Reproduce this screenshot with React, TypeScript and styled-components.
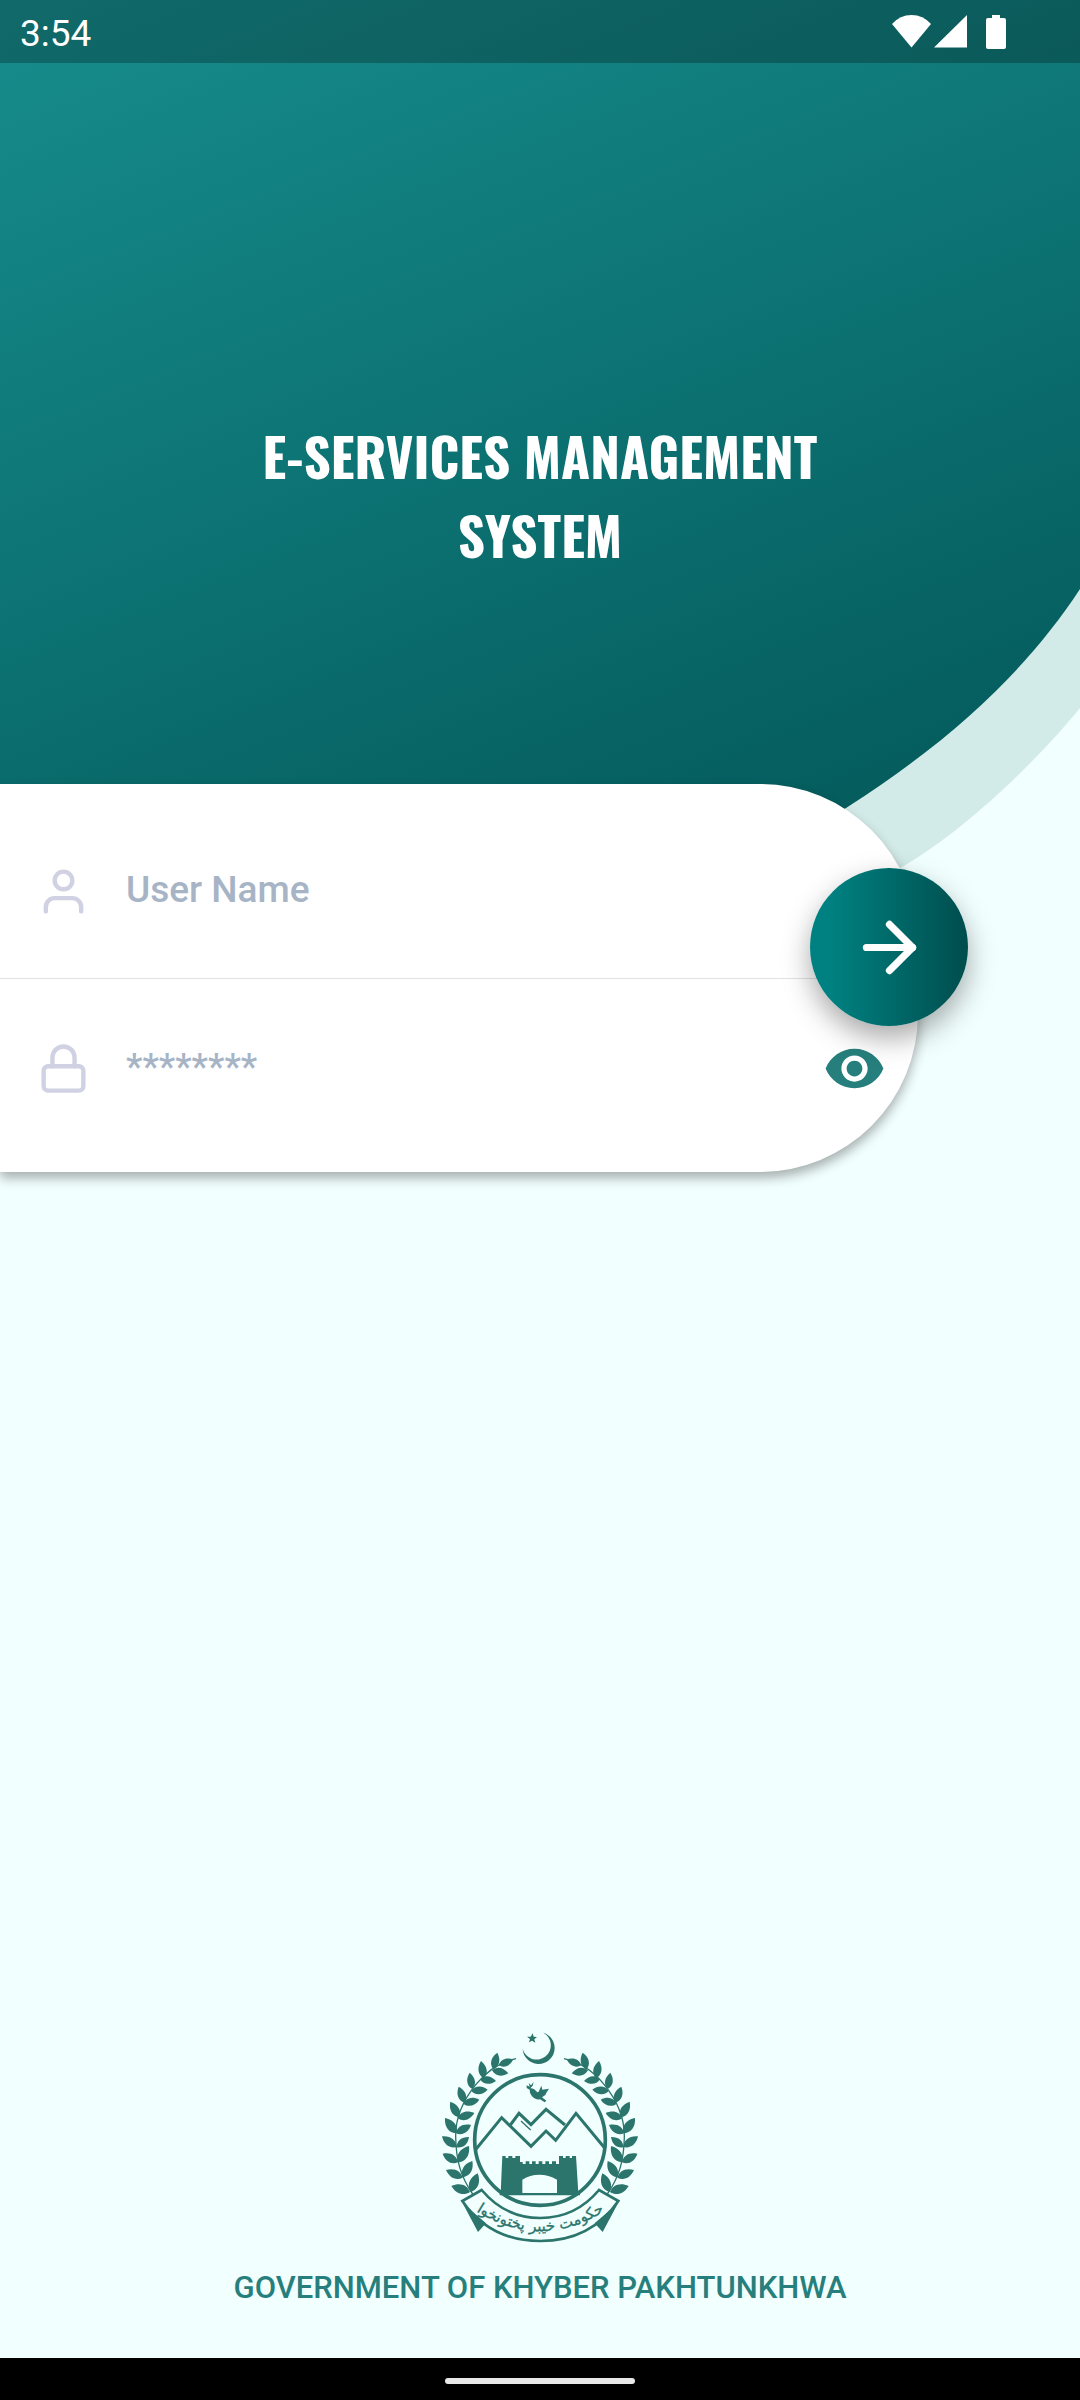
import React, { useState } from "react";
import styled, { createGlobalStyle } from "styled-components";
import { FiArrowRight, FiLock, FiUser } from "react-icons/fi";
import { MdVisibility } from "react-icons/md";

const GlobalStyle = createGlobalStyle`
  *, *::before, *::after { box-sizing: border-box; }
  body {
    margin: 0;
    background: #f1fffe;
    font-family: Roboto, "Noto Sans", sans-serif;
  }
`;

const Page = styled.div`
  position: relative;
  display: flex;
  flex-direction: column;
  min-height: 100vh;
  background: #f1fffe;
`;

const Backdrop = styled.svg`
  position: absolute;
  top: 0;
  left: 0;
  width: 100%;
  height: 900px;
`;

const StatusBar = styled.header`
  position: relative;
  display: flex;
  align-items: center;
  justify-content: space-between;
  height: 63px;
  padding: 0 74px 0 20px;
  background: rgba(0, 0, 0, 0.25);
  color: #fff;
`;

const Clock = styled.time`
  padding-top: 4px;
  font-size: 37px;
  line-height: 44px;
`;

const StatusIcons = styled.svg`
  width: 114px;
  height: 34px;
  fill: currentColor;
`;

const Hero = styled.section`
  position: relative;
  display: flex;
  justify-content: center;
  height: 721px;
  padding-top: 353px;
`;

const Title = styled.h1`
  max-width: 640px;
  margin: 0;
  color: #fff;
  font-family: Oswald, "Roboto Condensed", Roboto, sans-serif;
  font-size: 53px;
  font-weight: 700;
  line-height: 79px;
  text-align: center;
`;

const LoginForm = styled.form`
  position: relative;
  width: 85%;
`;

const Card = styled.div`
  background: #fff;
  border-radius: 0 158px 158px 0;
  box-shadow: 0 6px 12px rgba(0, 0, 0, 0.32);
`;

const Field = styled.div<{ $last?: boolean }>`
  display: flex;
  align-items: center;
  gap: 36px;
  height: ${(p) => (p.$last ? "193px" : "195px")};
  padding: ${(p) => (p.$last ? "0 32px 14px 37px" : "20px 32px 0 37px")};
  border-bottom: ${(p) => (p.$last ? "none" : "1px solid #e2e2e6")};
`;

const FieldIcon = styled.label`
  display: flex;
  color: #d0d2e3;
`;

const TextInput = styled.input`
  flex: 1;
  min-width: 0;
  height: 64px;
  padding: 0 0 4px;
  border: 0;
  outline: 0;
  background: transparent;
  color: #4a5a6c;
  font: 500 37px/42px Roboto, sans-serif;

  &::placeholder {
    color: #a7b4c6;
    opacity: 1;
  }
`;

const EyeButton = styled.button`
  display: flex;
  padding: 0;
  border: 0;
  background: none;
  color: #267f7c;
`;

const SubmitButton = styled.button`
  position: absolute;
  top: 84px;
  right: -50px;
  display: flex;
  align-items: center;
  justify-content: center;
  width: 158px;
  height: 158px;
  padding: 0;
  border: 0;
  border-radius: 50%;
  background: linear-gradient(90deg, #008181 12%, #004d4d 100%);
  box-shadow: 0 12px 28px rgba(0, 0, 0, 0.34);
  color: #fff;
`;

const Footer = styled.footer`
  display: flex;
  flex-direction: column;
  align-items: center;
  gap: 24px;
  margin-top: auto;
  padding-bottom: 50px;
`;

const Emblem = styled.svg`
  width: 200px;
  height: 214px;
  color: #2b756c;
`;

const Organisation = styled.p`
  margin: 0;
  color: #267f7c;
  font-size: 31px;
  font-weight: 500;
  line-height: 40px;
`;

const NavBar = styled.div`
  display: flex;
  align-items: center;
  justify-content: center;
  height: 42px;
  padding-top: 4px;
  background: #000;
`;

const NavHandle = styled.span`
  width: 190px;
  height: 6px;
  border-radius: 3px;
  background: #e8e8e8;
`;

type Leaf = [number, number, number, number];

/* Each leaf runs from its base on the stem to its tip. */
const LEAVES: Leaf[] = [
  [236, 166, 280, 148],
  [220, 178, 232, 128],
  [192, 205, 183, 153],
  [157, 237, 149, 188],
  [134, 278, 116, 230],
  [118, 322, 91, 275],
  [110, 370, 75, 324],
  [110, 411, 66, 379],
  [114, 457, 68, 431],
  [128, 503, 78, 480],
  [150, 546, 94, 528],
  [216, 181, 265, 190],
  [180, 208, 228, 213],
  [154, 243, 203, 239],
  [130, 281, 178, 269],
  [113, 325, 163, 309],
  [108, 370, 153, 345],
  [110, 412, 147, 381],
  [114, 457, 147, 408],
  [128, 502, 157, 453],
  [152, 546, 173, 490],
];

function leafPath([bx, by, tx, ty]: Leaf) {
  const dx = tx - bx;
  const dy = ty - by;
  const w = 0.31;
  const c = (along: number, side: number) =>
    `${(bx + dx * along - dy * side).toFixed(1)} ${(by + dy * along + dx * side).toFixed(1)}`;
  return `M${bx} ${by}C${c(0.25, w)} ${c(0.65, w)} ${tx} ${ty}C${c(0.65, -w)} ${c(0.25, -w)} ${bx} ${by}Z`;
}

const LEAF_SHAPE = LEAVES.map(leafPath).join("");

function Branch({ mirrored }: { mirrored?: boolean }) {
  return (
    <g transform={mirrored ? "matrix(-1 0 0 1 720 0)" : undefined}>
      <path d={LEAF_SHAPE} fill="currentColor" />
      <path
        d="M288 146C240 156 200 184 168 223C128 272 106 320 107 380C108 450 122 500 158 552"
        fill="none"
        stroke="currentColor"
        strokeWidth="4"
      />
    </g>
  );
}

function StateEmblem() {
  return (
    <Emblem viewBox="60 60 600 642" role="img" aria-label="Government of Khyber Pakhtunkhwa">
      <Branch />
      <Branch mirrored />
      <g fill="currentColor">
        <path d="M370 68A48 48 0 1 1 308 117A43 43 0 1 0 370 68Z" />
        <path d="M338 70L341 80L351 81L343 88L346 98L336 92L327 97L330 87L321 80L332 80Z" />
        <path d="M320 226L329 230L326 219L333 226L341 216L338 227L331 235Q341 233 349 244Q354 250 357 243L364 227L367 239L387 236L380 247L376 255L366 262L379 272L374 277L360 268Q345 270 336 259Q328 250 329 239L320 234Z" />
        <path
          fillRule="evenodd"
          d="M247 438H257V444H265V438H277V444H286V438H300V456H308V462H317V454H328V462H336V454H347V462H356V454H367V462H376V454H387V462H396V454H408V462H417V438H429V444H437V438H449V444H456V438H468L475 550H480V556H239V550H242ZM307 549H411V509Q386 494 358 494Q330 494 307 509Z"
        />
        <path d="M128 580L174 666L198 640Z" />
        <path d="M594 580L548 666L524 640Z" />
      </g>
      <g fill="none" stroke="currentColor">
        <circle cx="360" cy="390" r="196" strokeWidth="11" />
        <g strokeWidth="9">
          <path d="M166 420L245 323L333 409L378 363L407 391L468 310L554 414" />
          <path d="M271 345L297 310L333 344L378 298L435 345" />
        </g>
        <path d="M303 333L332 360" strokeWidth="4" />
        <path
          d="M185 540L127 573C180 650 260 693 361 693C462 693 542 650 595 573L537 540C490 596 430 624 361 624C292 624 232 596 185 540Z"
          strokeWidth="8"
        />
      </g>
      <path id="motto-line" d="M140 584Q361 744 582 584" fill="none" />
      <text
        fill="currentColor"
        stroke="currentColor"
        strokeWidth="1"
        fontFamily="'DejaVu Sans', 'Noto Sans', sans-serif"
        fontSize="45"
        textAnchor="middle"
        direction="rtl"
      >
        <textPath href="#motto-line" startOffset="50%">
          حکومت خیبر پختونخوا
        </textPath>
      </text>
    </Emblem>
  );
}

export default function App() {
  const [visible, setVisible] = useState(false);

  return (
    <>
      <GlobalStyle />
      <Page>
        <Backdrop viewBox="0 0 1080 900" preserveAspectRatio="none" aria-hidden="true">
          <defs>
            <linearGradient id="hero" gradientUnits="userSpaceOnUse" x1="0" y1="0" x2="431" y2="1077">
              <stop offset="0" stopColor="#178d8d" />
              <stop offset="1" stopColor="#035859" />
            </linearGradient>
          </defs>
          <path d="M0 0H1080V708C1040 757 970 827 902 867L840 900H0Z" fill="#d3ebe8" />
          <path d="M0 0H1080V589C1030 665 960 735 846 808L700 890H0Z" fill="url(#hero)" />
        </Backdrop>

        <StatusBar>
          <Clock>3:54</Clock>
          <StatusIcons viewBox="0 0 114 34" aria-hidden="true">
            <path d="M0 9Q8 0 19.500 0Q31 0 39 9L19.500 32.500Z" />
            <path d="M42 32.500H75V0Z" />
            <path d="M100 0H108V3H112Q114 3 114 5V32Q114 34 112 34H96Q94 34 94 32V5Q94 3 96 3H100Z" />
          </StatusIcons>
        </StatusBar>

        <Hero>
          <Title>E-SERVICES MANAGEMENT SYSTEM</Title>
        </Hero>

        <LoginForm onSubmit={(e) => e.preventDefault()}>
          <Card>
            <Field>
              <FieldIcon htmlFor="username" aria-label="User Name">
                <FiUser size={53} />
              </FieldIcon>
              <TextInput id="username" type="text" placeholder="User Name" autoComplete="username" />
            </Field>
            <Field $last>
              <FieldIcon htmlFor="password" aria-label="Password">
                <FiLock size={53} />
              </FieldIcon>
              <TextInput
                id="password"
                type={visible ? "text" : "password"}
                placeholder="********"
                autoComplete="current-password"
              />
              <EyeButton type="button" aria-label="Show password" onClick={() => setVisible(!visible)}>
                <MdVisibility size={63} />
              </EyeButton>
            </Field>
          </Card>
          <SubmitButton type="submit" aria-label="Log in">
            <FiArrowRight size={79} strokeWidth={2.2} />
          </SubmitButton>
        </LoginForm>

        <Footer>
          <StateEmblem />
          <Organisation>GOVERNMENT OF KHYBER PAKHTUNKHWA</Organisation>
        </Footer>

        <NavBar>
          <NavHandle />
        </NavBar>
      </Page>
    </>
  );
}
